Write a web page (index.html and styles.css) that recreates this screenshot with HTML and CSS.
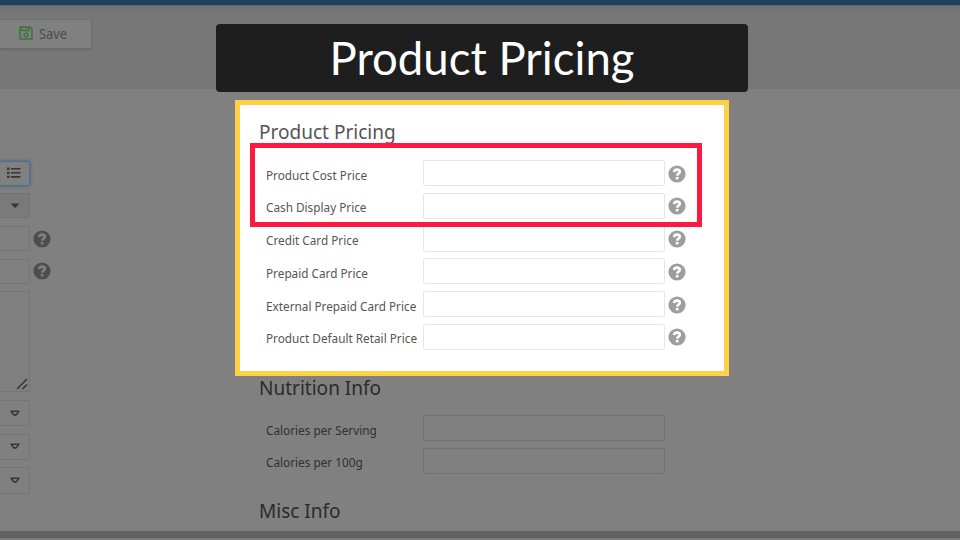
FILE: index.html
```
<!DOCTYPE html>
<html lang="en">
<head>
<meta charset="utf-8">
<title>Product Pricing</title>
<link rel="stylesheet" href="styles.css">
</head>
<body>
<svg class="defs" aria-hidden="true">
  <symbol id="help" viewBox="0 0 18 18"><circle cx="9" cy="9" r="8.6" fill="currentColor"/><path class="mark" d="M6.1 7.1C6.2 5.3 7.3 4.6 9 4.6S11.8 5.4 11.8 6.8C11.8 8.5 9.2 8.5 9.2 10.8"/><rect class="dot" x="7.8" y="12" width="2.7" height="2.4"/></symbol>
  <symbol id="caret" viewBox="0 0 10 7"><path d="M1.2 1.2H8.8L6.6 4.4Q5 5.8 3.4 4.4Z" fill="none" stroke="currentColor" stroke-width="1.6" stroke-linejoin="round"/></symbol>
</svg>
<div class="topbar"></div>
<header class="toolbar">
  <button class="save">
    <svg width="14" height="14" viewBox="0 0 14 14" fill="none" stroke="currentColor" stroke-width="1.4"><path d="M1 1H10.7L13 3.3V13H1Z"/><path d="M2.5 1V4.5H10V1M7 1.3V3"/><circle cx="7" cy="8.8" r="1.9"/></svg>
    <span>Save</span>
  </button>
</header>
<main class="content">
  <aside class="side">
    <div class="row"><div class="field focus"><svg width="14" height="12" viewBox="0 0 14 12" fill="currentColor"><path d="M0 .6h2.6v2.2H0zM4 .9h9.5v1.6H4zM0 4.7h2.6v2.2H0zM4 5h9.5v1.6H4zM0 8.8h2.6V11H0zM4 9.1h9.5v1.6H4z"/></svg></div></div>
    <div class="row"><div class="field filled"><svg width="10" height="6" viewBox="0 0 10 6"><path d="M.5.5h9L5.7 4.5q-.7.6-1.4 0Z" fill="currentColor"/></svg></div></div>
    <div class="row"><div class="field"></div><svg class="help"><use href="#help"/></svg></div>
    <div class="row"><div class="field"></div><svg class="help"><use href="#help"/></svg></div>
    <div class="area"><svg width="12" height="12" viewBox="0 0 12 12" stroke="currentColor" stroke-width="1.6"><path d="M1 11L11 1M6.5 11L11 6.5"/></svg></div>
    <div class="row select"><div class="field"><svg width="10" height="7"><use href="#caret"/></svg></div></div>
    <div class="row select"><div class="field"><svg width="10" height="7"><use href="#caret"/></svg></div></div>
    <div class="row select"><div class="field"><svg width="10" height="7"><use href="#caret"/></svg></div></div>
  </aside>
  <div class="forms">
    <section class="card">
      <h2><span>Product Pricing</span></h2>
      <div class="fields">
        <label><span>Product Cost Price</span></label><div class="input"></div><svg class="help"><use href="#help"/></svg>
        <label><span>Cash Display Price</span></label><div class="input"></div><svg class="help"><use href="#help"/></svg>
        <label><span>Credit Card Price</span></label><div class="input"></div><svg class="help"><use href="#help"/></svg>
        <label><span>Prepaid Card Price</span></label><div class="input"></div><svg class="help"><use href="#help"/></svg>
        <label><span>External Prepaid Card Price</span></label><div class="input"></div><svg class="help"><use href="#help"/></svg>
        <label><span>Product Default Retail Price</span></label><div class="input"></div><svg class="help"><use href="#help"/></svg>
      </div>
      <div class="marker"></div>
    </section>
    <section class="plain">
      <h2><span>Nutrition Info</span></h2>
      <div class="fields">
        <label><span>Calories per Serving</span></label><div class="input"></div><i></i>
        <label><span>Calories per 100g</span></label><div class="input"></div><i></i>
      </div>
      <h2 class="misc"><span>Misc Info</span></h2>
    </section>
  </div>
</main>
<footer class="scroll"></footer>
<div class="banner">Product Pricing</div>
</body>
</html>
```
FILE: styles.css
```
* { box-sizing: border-box; }
body {
  margin: 0;
  width: 960px;
  height: 540px;
  overflow: hidden;
  position: relative;
  display: flex;
  flex-direction: column;
  background: #7b7b7b;
  font-family: "Noto Sans", "Open Sans", sans-serif;
}
.defs { position: absolute; width: 0; height: 0; }
svg { display: block; flex: none; }
.topbar { height: 5px; background: #1a425f; flex: none; }
.toolbar {
  height: 84px;
  flex: none;
  padding-top: 14.5px;
  background: linear-gradient(#616568, #717272 2px, #777 6px);
}
.save {
  display: flex;
  align-items: center;
  gap: 6px;
  width: 91px;
  height: 28px;
  padding: 0 0 0 19px;
  border: 0;
  background: #808080;
  box-shadow: 0 1px 2px 1px #666d6d;
  font: 13.5px "Noto Sans", sans-serif;
  color: #4b4b4b;
}
.save svg { color: #397535; margin-top: -2px; }
.save span { transform: scaleX(.95); transform-origin: left; }
.content {
  display: flex;
  height: 441.5px;
  flex: none;
  background: #808080;
}
.side {
  width: 235px;
  padding-top: 71px;
  color: #373737;
}
.row { display: flex; align-items: center; height: 26px; margin-bottom: 6.8px; }
.field {
  width: 29.5px;
  height: 25px;
  border: 1.5px solid #757575;
  border-left: 0;
  border-radius: 0 2px 2px 0;
  display: flex;
  align-items: center;
  padding-left: 10px;
}
.focus { border-color: #506d8c; box-shadow: 0 0 3px 1px #536f8d; padding-left: 7px; }
.filled { background: #7a7a7a; border-color: #727272; }
.help { width: 18px; height: 18px; color: #9d9d9d; --mark: #fff; }
.side .help { margin-left: 3px; color: #4e4e4e; --mark: #808080; }
.mark { fill: none; stroke: var(--mark); stroke-width: 2.6; }
.dot { fill: var(--mark); }
.area {
  width: 29.5px;
  height: 101px;
  margin-bottom: 7.5px;
  border: 1.5px solid #757575;
  border-left: 0;
  display: flex;
  align-items: flex-end;
  justify-content: flex-end;
  padding: 0 1px 1px 0;
}
.select { height: 27px; margin-bottom: 6.6px; }
.select .field { height: 26.5px; }
.forms { padding-top: 11px; }
.card {
  position: relative;
  width: 494px;
  height: 275.5px;
  background: #fff;
  border: 5px solid #ffd147;
  color: #555;
}
h2 {
  margin: 0;
  font-weight: 400;
  font-size: 20.5px;
  line-height: 28px;
  white-space: nowrap;
}
h2 span, label span { display: inline-block; transform: scaleX(.928); transform-origin: left; }
label span { transform: scaleX(.905); }
.card h2 { padding: 12px 0 0 19px; height: 55px; }
.fields {
  display: grid;
  grid-template-columns: 156.5px 242px 18px;
  column-gap: 0;
  row-gap: 6.8px;
  grid-auto-rows: 26px;
  align-items: center;
  padding-left: 26px;
}
.fields .help { margin: 1px 0 0 3px; }
label { font-size: 13px; line-height: 20px; white-space: nowrap; padding-top: 3px; }
.input { height: 26px; border: 1.5px solid #e6e6e6; border-radius: 2px; }
.marker {
  position: absolute;
  left: 10px;
  top: 38px;
  width: 452px;
  height: 84px;
  border: 5px solid #ff1840;
}
.plain { width: 495px; color: #2b2b2b; }
.plain h2 { padding-left: 24px; height: 39.5px; line-height: 22px; }
.plain .fields { padding-left: 31px; }
.plain label { color: #303030; }
.plain .input { border-color: #717171; }
.plain .misc { padding-top: 25px; line-height: 23px; }
.scroll { height: 7px; background: #626262; flex: none; }
.banner {
  position: absolute;
  left: 216px;
  top: 24px;
  width: 532px;
  height: 68px;
  border-radius: 4px;
  background: #1e1e1e;
  color: #fff;
  font: 45.5px/67px Lato, sans-serif;
  text-align: center;
}
```
